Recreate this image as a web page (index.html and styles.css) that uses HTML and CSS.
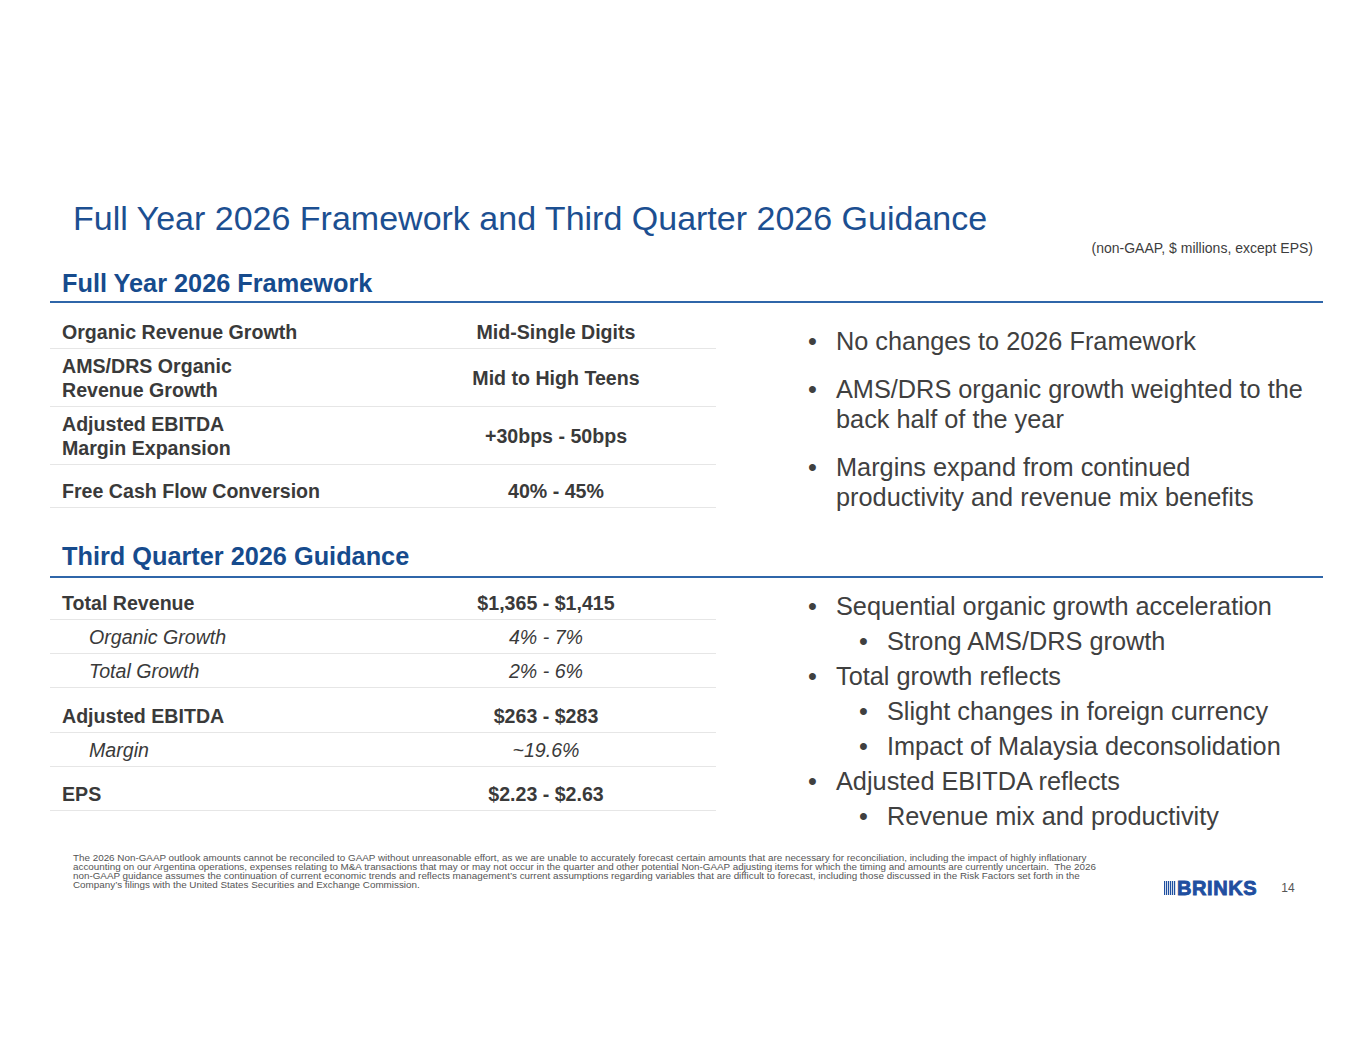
FILE: index.html
```html
<!DOCTYPE html>
<html lang="en">
<head>
<meta charset="utf-8">
<title>Full Year 2026 Framework and Third Quarter 2026 Guidance</title>
<link rel="stylesheet" href="styles.css">
</head>
<body>
<div class="slide">
  <h1 class="title">Full Year 2026 Framework and Third Quarter 2026 Guidance</h1>
  <div class="units">(non-GAAP, $ millions, except EPS)</div>

  <section class="block block-fy">
    <h2 class="block-head">Full Year 2026 Framework</h2>
    <div class="block-body">
      <div class="table table-fy">
        <div class="row row-first"><div class="label">Organic Revenue Growth</div><div class="value">Mid-Single Digits</div></div>
        <div class="row"><div class="label">AMS/DRS Organic<br>Revenue Growth</div><div class="value">Mid to High Teens</div></div>
        <div class="row"><div class="label">Adjusted EBITDA<br>Margin Expansion</div><div class="value">+30bps - 50bps</div></div>
        <div class="row row-gap"><div class="label">Free Cash Flow Conversion</div><div class="value">40% - 45%</div></div>
      </div>
      <ul class="bullets bullets-fy">
        <li>No changes to 2026 Framework</li>
        <li>AMS/DRS organic growth weighted to the back half of the year</li>
        <li>Margins expand from continued productivity and revenue mix benefits</li>
      </ul>
    </div>
  </section>

  <section class="block block-q3">
    <h2 class="block-head">Third Quarter 2026 Guidance</h2>
    <div class="block-body">
      <div class="table table-q3">
        <div class="row row-gap"><div class="label">Total Revenue</div><div class="value">$1,365 - $1,415</div></div>
        <div class="row sub"><div class="label">Organic Growth</div><div class="value">4% - 7%</div></div>
        <div class="row sub"><div class="label">Total Growth</div><div class="value">2% - 6%</div></div>
        <div class="row row-gap"><div class="label">Adjusted EBITDA</div><div class="value">$263 - $283</div></div>
        <div class="row sub"><div class="label">Margin</div><div class="value">~19.6%</div></div>
        <div class="row row-gap"><div class="label">EPS</div><div class="value">$2.23 - $2.63</div></div>
      </div>
      <ul class="bullets bullets-q3">
        <li>Sequential organic growth acceleration</li>
        <li class="lvl2">Strong AMS/DRS growth</li>
        <li>Total growth reflects</li>
        <li class="lvl2">Slight changes in foreign currency</li>
        <li class="lvl2">Impact of Malaysia deconsolidation</li>
        <li>Adjusted EBITDA reflects</li>
        <li class="lvl2">Revenue mix and productivity</li>
      </ul>
    </div>
  </section>

  <footer class="footer">
    <p class="footnote">The 2026 Non-GAAP outlook amounts cannot be reconciled to GAAP without unreasonable effort, as we are unable to accurately forecast certain amounts that are necessary for reconciliation, including the impact of highly inflationary<br>accounting on our Argentina operations, expenses relating to M&amp;A transactions that may or may not occur in the quarter and other potential Non-GAAP adjusting items for which the timing and amounts are currently uncertain.&nbsp; The 2026<br>non-GAAP guidance assumes the continuation of current economic trends and reflects management’s current assumptions regarding variables that are difficult to forecast, including those discussed in the Risk Factors set forth in the<br>Company’s filings with the United States Securities and Exchange Commission.</p>
    <div class="brand">
      <div class="logo">
        <svg class="logo-bars" width="12" height="14" viewBox="0 0 12 14" aria-hidden="true">
          <rect x="0" y="0" width="1.2" height="14"/>
          <rect x="2" y="0" width="1.2" height="14"/>
          <rect x="4" y="0" width="1.2" height="14"/>
          <rect x="6" y="0" width="1.2" height="14"/>
          <rect x="8" y="0" width="1.2" height="14"/>
          <rect x="10" y="0" width="1.2" height="14"/>
        </svg>
        <span class="wordmark">BRINKS</span>
      </div>
      <span class="page-no">14</span>
    </div>
  </footer>
</div>
</body>
</html>
```
FILE: styles.css
```css
* { box-sizing: border-box; }

html, body {
  margin: 0;
  padding: 0;
  background: #ffffff;
}

body {
  font-family: "Liberation Sans", Arial, sans-serif;
  color: #3b3b3b;
}

.slide {
  width: 1365px;
  height: 1055px;
  padding-top: 198px;
  overflow: hidden;
}

.title {
  margin: 0;
  padding-left: 73px;
  font-size: 34px;
  line-height: 40px;
  font-weight: normal;
  color: #1c4f91;
  white-space: nowrap;
}

.units {
  margin-top: 2px;
  padding-right: 52px;
  text-align: right;
  font-size: 14px;
  line-height: 16px;
  color: #3d3d3d;
}

.block {
  margin-left: 50px;
  width: 1273px;
}

.block-fy { margin-top: 12px; }
.block-q3 { margin-top: 29px; }

.block-head {
  margin: 0;
  padding: 0 0 3px 12px;
  font-size: 25.3px;
  line-height: 30px;
  font-weight: bold;
  color: #164b8d;
  border-bottom: 2px solid #2f66a9;
}

.block-q3 .block-head { padding-bottom: 5px; }

.block-body {
  display: flex;
  align-items: flex-start;
}

.table {
  width: 666px;
  flex: none;
}

.row {
  display: flex;
  align-items: center;
  padding: 5px 0 4px;
  border-bottom: 1.5px solid #e6e6e6;
  font-size: 19.6px;
  line-height: 24px;
  font-weight: bold;
  color: #3a3a3a;
}

.row-first { padding-top: 17px; }
.row-gap { padding-top: 14px; }
.table-q3 .row-gap { padding-top: 15.5px; }
.table-q3 .row:first-child { padding-top: 13px; }

.label {
  flex: 1;
  padding-left: 12px;
}

.value {
  flex: none;
  text-align: center;
}

.table-fy .value { width: 320px; }
.table-q3 .value { width: 340px; }

.row.sub {
  font-weight: normal;
  font-style: italic;
}

.row.sub .label { padding-left: 39px; }

.bullets {
  list-style: none;
  margin: 0 0 0 92px;
  padding: 0;
  flex: 1;
  font-size: 25.3px;
  color: #404040;
}

.bullets li {
  display: flex;
}

.bullets li::before {
  content: "•";
  flex: none;
  width: 28px;
}

.bullets-fy {
  padding-top: 23px;
  line-height: 30px;
  padding-right: 10px;
}

.bullets-fy li + li { margin-top: 18px; }

.bullets-q3 {
  padding-top: 11px;
  line-height: 35px;
}

.bullets li.lvl2 { padding-left: 51px; }

.footer {
  display: flex;
  align-items: flex-end;
  margin-top: 19px;
}

.footnote {
  margin: 0;
  padding-left: 73px;
  flex: none;
  width: 1100px;
  font-size: 9.85px;
  line-height: 9px;
  color: #555555;
  white-space: nowrap;
}

.brand {
  display: flex;
  align-items: center;
  margin-left: 64px;
  margin-bottom: -6px;
}

.logo {
  display: flex;
  align-items: center;
  color: #1f4fa0;
}

.logo-bars {
  display: block;
  fill: #1f4fa0;
  margin-right: 1px;
}

.wordmark {
  font-size: 20px;
  line-height: 14px;
  font-weight: bold;
  letter-spacing: 0.6px;
  -webkit-text-stroke: 0.9px #1f4fa0;
}

.page-no {
  margin-left: 24px;
  font-size: 12px;
  line-height: 14px;
  color: #555555;
}
```
